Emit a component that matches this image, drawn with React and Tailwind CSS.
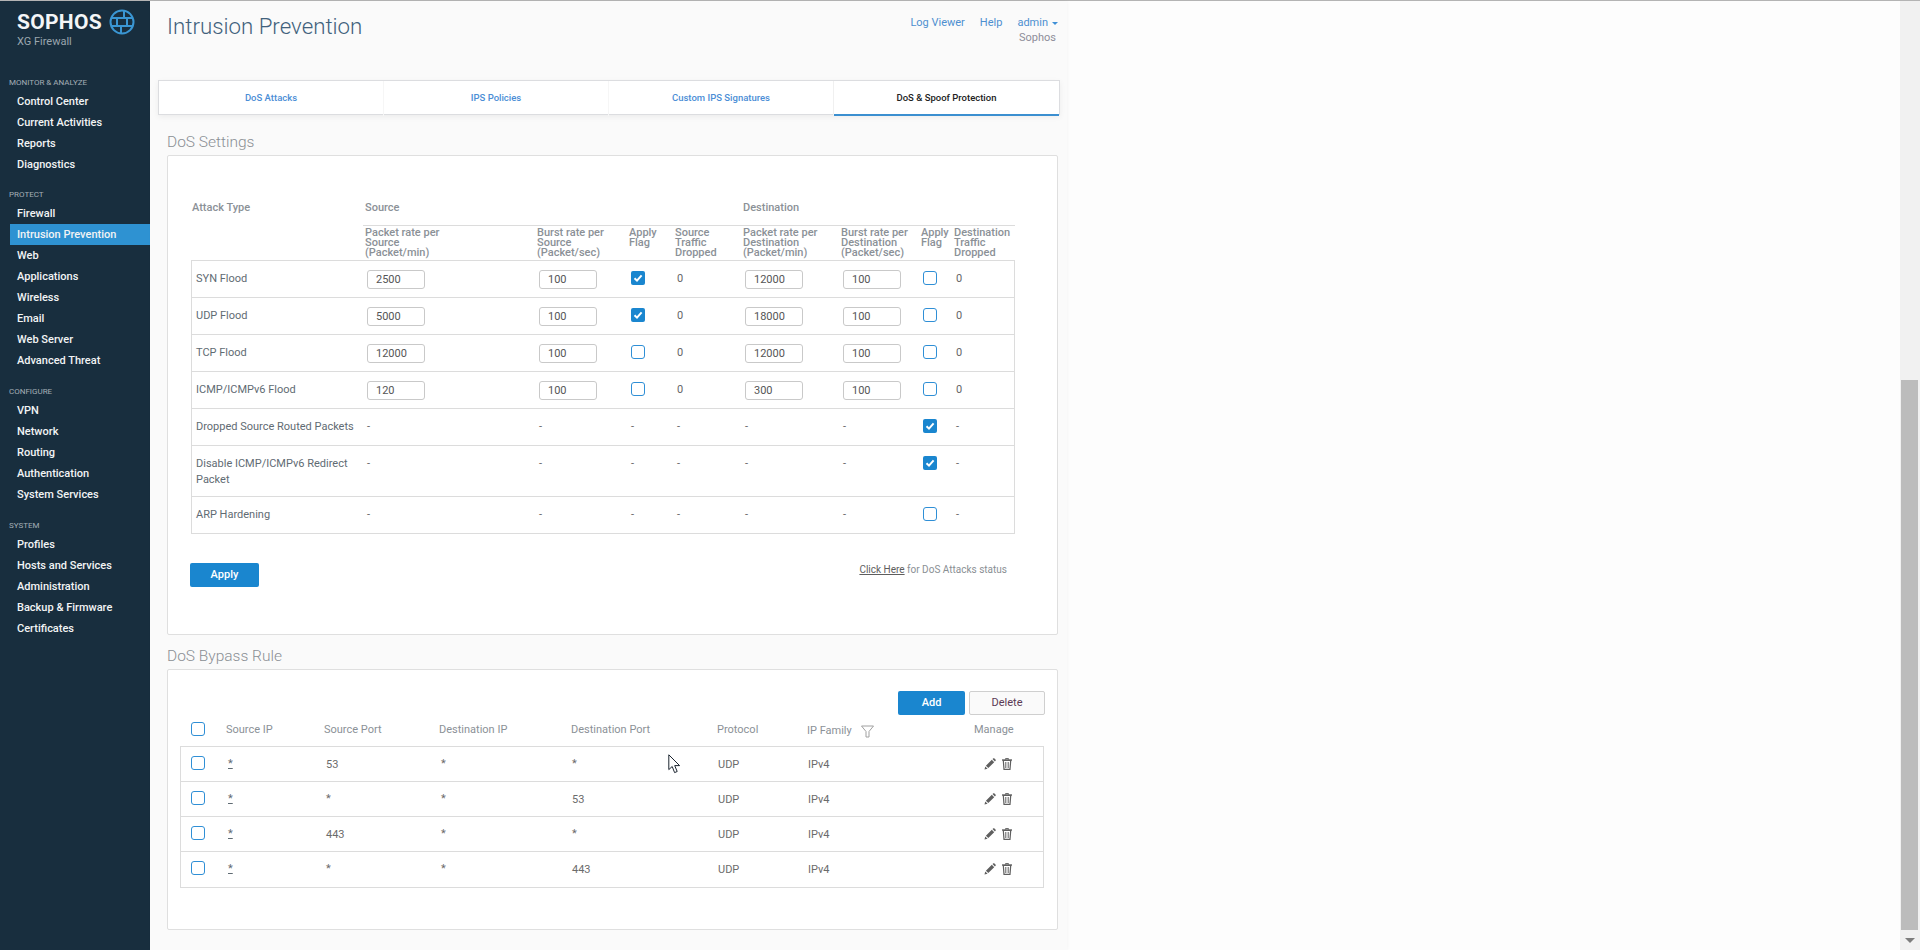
const NAV = [
  { t: 'MONITOR & ANALYZE', items: ['Control Center', 'Current Activities', 'Reports', 'Diagnostics'] },
  { t: 'PROTECT', items: ['Firewall', 'Intrusion Prevention', 'Web', 'Applications', 'Wireless', 'Email', 'Web Server', 'Advanced Threat'] },
  { t: 'CONFIGURE', items: ['VPN', 'Network', 'Routing', 'Authentication', 'System Services'] },
  { t: 'SYSTEM', items: ['Profiles', 'Hosts and Services', 'Administration', 'Backup & Firmware', 'Certificates'] },
];

const GRID = 'grid grid-cols-[172px_172px_93px_47px_68px_98px_80px_33px_61px]';
const BGRID = 'grid grid-cols-[46px_98px_115px_132px_146px_90px_167px_68px]';

function Globe() {
  return (
    <svg width="26" height="26" viewBox="0 0 26 26" fill="none" stroke="#3a96d3" strokeWidth="2">
      <circle cx="13" cy="13" r="11.5" />
      <path d="M2 9h22M2 17h22M15 2v7M8 9v8M18 9v8M12 17v7" />
    </svg>
  );
}

function Check({ on }) {
  if (on) {
    return (
      <span className="flex h-[14px] w-[14px] items-center justify-center rounded-[2px] bg-[#1a86cf]">
        <svg width="10" height="10" viewBox="0 0 10 10" fill="none" stroke="#fff" strokeWidth="2">
          <path d="M1.5 5.2 4 7.6 8.6 2.4" />
        </svg>
      </span>
    );
  }
  return <span className="block h-[14px] w-[14px] rounded-[3px] border border-[#2f8fd6] bg-white" />;
}

function Num({ v, dest }) {
  return (
    <div className={`${dest ? 'ml-[1px]' : 'ml-[3px]'} mt-[9px] flex h-[19px] w-[58px] items-end rounded-[3px] border border-[#c9c9c9] bg-white pb-[1px] pl-[8px] text-[11px] leading-[14px] text-[#555]`}>
      {v}
    </div>
  );
}

function Box({ on, dest }) {
  return (
    <div className={`${dest ? 'ml-[1px]' : 'ml-[2px]'} mt-[10px]`}>
      <Check on={on} />
    </div>
  );
}

function Val({ v, ml }) {
  return <div className={`${ml} mt-[11px] text-[11px] leading-[14px] text-[#666]`}>{v}</div>;
}

function FloodRow({ name, a, b, c, d, e, f }) {
  return (
    <div className={`${GRID} h-[37px] border-b border-[#dcdcdc]`}>
      <div className="mt-[11px] pl-[4px] text-[11px] leading-[14px] text-[#5f6b73]">{name}</div>
      <Num v={a} />
      <Num v={b} />
      <Box on={c} />
      <Val v="0" ml="ml-[1px]" />
      <Num v={d} dest />
      <Num v={e} dest />
      <Box on={f} dest />
      <Val v="0" ml="ml-[1px]" />
    </div>
  );
}

function DashRow({ name, on, h }) {
  return (
    <div className={`${GRID} ${h} border-b border-[#dcdcdc] last:border-b-0`}>
      <div className="mt-[10px] pl-[4px] text-[11px] leading-[16px] text-[#5f6b73]">{name}</div>
      <Val v="-" ml="ml-[3px]" />
      <Val v="-" ml="ml-[3px]" />
      <Val v="-" ml="ml-[2px]" />
      <Val v="-" ml="ml-[1px]" />
      <Val v="-" ml="ml-[1px]" />
      <Val v="-" ml="ml-[1px]" />
      <Box on={on} dest />
      <Val v="-" ml="ml-[1px]" />
    </div>
  );
}

function HeadCell({ lines }) {
  return (
    <div className="text-[11px] font-medium leading-[10px] text-[#8b9197]">
      {lines.map((l) => (
        <div key={l}>{l}</div>
      ))}
    </div>
  );
}

function Pencil() {
  return (
    <svg width="12" height="12" viewBox="0 0 12 12" fill="#5f5f5f">
      <path d="M0.5 11.5 1.2 8.4 3.6 10.8zM1.9 7.7 7.8 1.8 10.2 4.2 4.3 10.1zM8.5 1.1 9.4 0.3Q9.8 0 10.2 0.3L11.7 1.8Q12 2.2 11.7 2.6L10.9 3.5z" />
    </svg>
  );
}

function Trash() {
  return (
    <svg width="10" height="12" viewBox="0 0 10 12" fill="none" stroke="#5f5f5f">
      <path d="M0 2h10" strokeWidth="1.4" />
      <path d="M3.5 1.5V.6h3v.9" strokeWidth="1" />
      <path d="M1.3 2.5 2 11.4h6l.7-8.9z" strokeWidth="1.2" />
      <path d="M3.8 4v6M6.2 4v6" strokeWidth="1" />
    </svg>
  );
}

function BypassRow({ a, b }) {
  const star = (v) => (v === '*' ? 'mt-[10px]' : 'mt-[11px]');
  return (
    <div className={`${BGRID} h-[35px] border-b border-[#dcdcdc] last:border-b-0 text-[11px] text-[#6b6b6b]`}>
      <div className="ml-[10px] mt-[9px]">
        <Check />
      </div>
      <div className="mt-[10px] pl-[1px] leading-[14px] text-[#5f6b73] underline">*</div>
      <div className={`${star(a)} pl-[1px] leading-[14px]`}>{a}</div>
      <div className="mt-[10px] pl-[1px] leading-[14px]">*</div>
      <div className={`${star(b)} leading-[14px]`}>{b}</div>
      <div className="mt-[11px] leading-[14px]">UDP</div>
      <div className="mt-[11px] leading-[14px]">IPv4</div>
      <div className="mt-[10px] flex h-[14px] items-center gap-[6px] pl-[9px]">
        <Pencil />
        <Trash />
      </div>
    </div>
  );
}

export default function App() {
  return (
    <div className="relative flex h-[950px] w-[1920px] flex-col overflow-hidden bg-[#fdfdfd] font-['Roboto',sans-serif]">
      <div className="h-px shrink-0 bg-[#b4b4b4]" />
      <div className="flex min-h-0 flex-1">
        <aside className="w-[150px] shrink-0 bg-[#182e3e]">
          <div className="h-[73px] pl-[17px] pt-[8px]">
            <div className="flex items-center gap-[7px]">
              <span className="text-[21px] font-bold leading-[24px] tracking-[0.3px] text-[#f4f6f7]">SOPHOS</span>
              <Globe />
            </div>
            <div className="text-[11px] leading-[14px] text-[#9aa6ae]">XG Firewall</div>
          </div>
          {NAV.map((s, n) => (
            <div key={s.t} className={n === 0 ? 'mb-[11px]' : 'mb-[12px]'}>
              <div className="h-[17px] pl-[9px] text-[8px] leading-[17px] text-[#a4afb6]">{s.t}</div>
              {s.items.map((i) => (
                <div
                  key={i}
                  className={`ml-[10px] h-[21px] pl-[7px] text-[11px] font-medium leading-[21px] text-[#f2f4f5] ${
                    i === 'Intrusion Prevention' ? 'bg-[#2e92d2]' : ''
                  }`}
                >
                  {i}
                </div>
              ))}
            </div>
          ))}
        </aside>

        <main className="w-[917px] shrink-0 bg-[#fafafa] pl-[8px] shadow-[1px_0_3px_rgba(0,0,0,0.03)]">
          <header className="flex h-[79px] pl-[9px] pr-[9px]">
            <h1 className="flex-1 pt-[11px] text-[22.3px] font-light leading-[28px] text-[#41617c]">Intrusion Prevention</h1>
            <div className="pt-[15px] text-[11px] leading-[14px] text-right">
              <div className="flex gap-[15px] text-[#4d8fd0]">
                <span>Log Viewer</span>
                <span>Help</span>
                <span className="flex items-center gap-[4px]">
                  admin
                  <span className="h-0 w-0 border-x-[3px] border-t-[3px] border-x-transparent border-t-[#3f8fd6]" />
                </span>
              </div>
              <div className="mt-[1px] pr-[2px] text-[#8d8d99]">Sophos</div>
            </div>
          </header>

          <nav className="grid h-[35px] w-[902px] grid-cols-4 border border-[#dcdde0] bg-white text-center text-[9.5px] font-medium leading-[33px] text-[#4b8ed6] shadow-[0_2px_6px_rgba(0,0,0,0.06)]">
            <div className="border-r border-[#f6f6f6]">DoS Attacks</div>
            <div className="border-r border-[#f6f6f6]">IPS Policies</div>
            <div className="border-r border-[#f0f0f0]">Custom IPS Signatures</div>
            <div className="border-b-2 border-[#3b8fd0] text-[#222]">DoS &amp; Spoof Protection</div>
          </nav>

          <h2 className="ml-[9px] mt-[17px] text-[15.5px] font-light leading-[20px] text-[#8a8f94]">DoS Settings</h2>
          <section className="ml-[9px] mt-[3px] h-[480px] w-[891px] rounded-[2px] border border-[#dfdfdf] bg-white pl-[23px] pr-[42px] pt-[45px]">
            <div className={`${GRID} h-[24px]`}>
              <div className="pl-[1px] text-[11px] font-medium leading-[14px] text-[#8b9197]">Attack Type</div>
              <div className="col-span-4 pl-[2px] text-[11px] font-medium leading-[14px] text-[#8b9197]">Source</div>
              <div className="col-span-4 text-[11px] font-medium leading-[14px] text-[#8b9197]">Destination</div>
            </div>
            <div className={`${GRID} h-[35px]`}>
              <div />
              <div className="col-span-8 grid grid-cols-[172px_92px_46px_68px_98px_80px_33px_61px] border-t border-[#dcdcdc] pl-[2px] pt-[2px]">
                <HeadCell lines={['Packet rate per', 'Source', '(Packet/min)']} />
                <HeadCell lines={['Burst rate per', 'Source', '(Packet/sec)']} />
                <HeadCell lines={['Apply', 'Flag']} />
                <HeadCell lines={['Source', 'Traffic', 'Dropped']} />
                <HeadCell lines={['Packet rate per', 'Destination', '(Packet/min)']} />
                <HeadCell lines={['Burst rate per', 'Destination', '(Packet/sec)']} />
                <HeadCell lines={['Apply', 'Flag']} />
                <HeadCell lines={['Destination', 'Traffic', 'Dropped']} />
              </div>
            </div>
            <div className="border border-[#dcdcdc]">
              <FloodRow name="SYN Flood" a="2500" b="100" c d="12000" e="100" />
              <FloodRow name="UDP Flood" a="5000" b="100" c d="18000" e="100" />
              <FloodRow name="TCP Flood" a="12000" b="100" d="12000" e="100" />
              <FloodRow name="ICMP/ICMPv6 Flood" a="120" b="100" d="300" e="100" />
              <DashRow name="Dropped Source Routed Packets" on h="h-[37px]" />
              <DashRow name="Disable ICMP/ICMPv6 Redirect Packet" on h="h-[51px]" />
              <DashRow name="ARP Hardening" h="h-[36px]" />
            </div>
            <div className="mt-[29px] flex items-start justify-between">
              <button className="-ml-[1px] h-[24px] w-[69px] rounded-[2px] bg-[#1a86cf] text-[11px] font-medium text-white">Apply</button>
              <div className="mr-[8px] mt-[-1px] text-[10px] text-[#8a8f94]">
                <span className="text-[#5e5e5e] underline">Click Here</span> for DoS Attacks status
              </div>
            </div>
          </section>

          <h2 className="ml-[9px] mt-[11px] text-[15.5px] font-light leading-[20px] text-[#8a8f94]">DoS Bypass Rule</h2>
          <section className="ml-[9px] mt-[3px] h-[261px] w-[891px] rounded-[2px] border border-[#dfdfdf] bg-white pl-[12px] pr-[13px] pt-[21px]">
            <div className="-mr-[1px] flex justify-end gap-[4px]">
              <button className="h-[24px] w-[67px] rounded-[2px] bg-[#1a86cf] text-[11px] font-medium text-white">Add</button>
              <button className="h-[24px] w-[76px] rounded-[2px] border border-[#cfcfcf] bg-[#fafafa] text-[11px] text-[#5b3a55]">Delete</button>
            </div>
            <div className={`${BGRID} h-[31px] text-[11px] leading-[14px] text-[#8b9197]`}>
              <div className="ml-[11px] mt-[7px]">
                <Check />
              </div>
              <div className="mt-[8px]">Source IP</div>
              <div className="mt-[8px]">Source Port</div>
              <div className="mt-[8px]">Destination IP</div>
              <div className="mt-[8px]">Destination Port</div>
              <div className="mt-[8px]">Protocol</div>
              <div className="mt-[9px] flex h-[14px] items-center gap-[9px]">
                IP Family
                <svg width="13" height="13" viewBox="0 0 13 13" fill="none" stroke="#a0a0a0">
                  <path d="M0.5 1h12L8 6.5V12H5V6.5z" />
                </svg>
              </div>
              <div className="mt-[8px] whitespace-nowrap">Manage</div>
            </div>
            <div className="border border-[#dcdcdc]">
              <BypassRow a="53" b="*" />
              <BypassRow a="*" b="53" />
              <BypassRow a="443" b="*" />
              <BypassRow a="*" b="443" />
            </div>
          </section>
        </main>

        <div className="flex-1" />

        <div className="flex w-[20px] shrink-0 flex-col bg-[#f1f1f1] pl-[1px] pr-[2px]">
          <div className="h-[379px]" />
          <div className="flex-1 bg-[#bcbcbc]" />
          <div className="flex h-[20px] items-center justify-center">
            <span className="h-0 w-0 border-x-[5px] border-t-[5px] border-x-transparent border-t-[#7d7d7d]" />
          </div>
        </div>
      </div>

      <svg className="absolute left-[668px] top-[754px]" width="13" height="20" viewBox="0 0 13 20" fill="#fff" stroke="#1c2530" strokeWidth="1">
        <path d="M0.8 0.8V15.6L4.2 12.5L6.6 18.6L9.2 17.5L6.7 11.6H11.6Z" />
      </svg>
    </div>
  );
}
